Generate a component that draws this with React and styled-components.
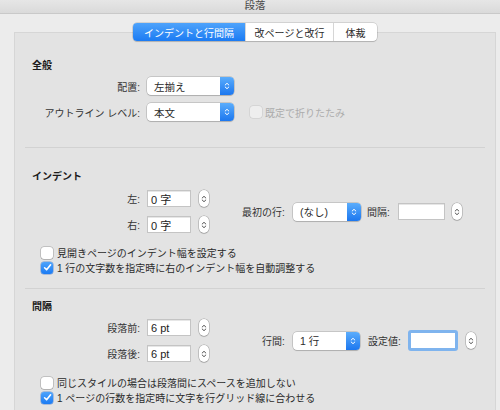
import styled, { createGlobalStyle } from 'styled-components';

const GlobalStyle = createGlobalStyle`
  html, body {
    margin: 0;
    padding: 0;
    overflow: hidden;
    background: #ececec;
  }
  body {
    font-family: 'Liberation Sans', 'Noto Sans CJK JP', sans-serif;
    -webkit-font-smoothing: antialiased;
  }
`;

const Window = styled.div`
  width: 510px;
  height: 410px;
  display: flex;
  flex-direction: column;
  background: #ececec;
  color: #2b2b2b;
  font-size: 10px;
`;

const TitleBar = styled.div`
  height: 13px;
  line-height: 11px;
  text-align: center;
  font-size: 10.5px;
  color: #4a4a4a;
  background: linear-gradient(#e6e6e6, #dadada);
  border-bottom: 1px solid #c9c9c9;
  overflow: hidden;
`;

const Content = styled.div`
  flex: 1;
  display: flex;
  flex-direction: column;
  padding: 9px 14px 0;
`;

const TabBar = styled.div`
  position: relative;
  z-index: 1;
  align-self: center;
  display: flex;
  height: 18px;
  margin-bottom: -9px;
  border-radius: 4px;
  background: #fff;
  box-shadow: 0 0 0 0.5px rgba(0, 0, 0, 0.22), 0 1px 1px rgba(0, 0, 0, 0.12);
`;

const Tab = styled.div`
  display: flex;
  align-items: center;
  justify-content: center;
  width: ${(p) => p.$w}px;
  font-size: 10px;
  color: ${(p) => (p.$active ? '#fff' : '#2b2b2b')};
  background: ${(p) => (p.$active ? 'linear-gradient(#4ea3fb, #1b7bf3)' : 'transparent')};
  border-left: ${(p) => (p.$first ? 'none' : '1px solid #d6d6d6')};
  &:first-child {
    border-radius: 4px 0 0 4px;
  }
  &:last-child {
    border-radius: 0 4px 4px 0;
  }
`;

const Panel = styled.div`
  flex: 1;
  background: #e3e3e3;
  border: 1px solid #d6d6d6;
  border-bottom: none;
  padding-left: 17px;
`;

const Section = styled.div`
  padding-top: ${(p) => p.$top}px;
  padding-bottom: ${(p) => p.$bottom}px;
`;

const SectionTitle = styled.div`
  height: 12px;
  line-height: 12px;
  font-weight: bold;
  font-size: 10px;
  color: #1c1c1c;
  margin-bottom: ${(p) => p.$gap}px;
`;

const Divider = styled.div`
  height: 1px;
  margin: 0 10px 0 -7px;
  background: #d2d2d2;
`;

const FormGrid = styled.div`
  display: grid;
  grid-template-columns: 108px auto;
  column-gap: 7px;
  row-gap: ${(p) => p.$gap}px;
  align-items: center;
`;

const Label = styled.div`
  text-align: right;
  color: #333;
  white-space: nowrap;
`;

const Controls = styled.div`
  display: flex;
  align-items: center;
`;

const SplitRow = styled.div`
  display: flex;
  align-items: center;
`;

const RightGroup = styled.div`
  display: flex;
  align-items: center;
  gap: 3px;
  margin-left: ${(p) => p.$offset}px;
`;

const InlineLabel = styled.div`
  width: ${(p) => p.$w}px;
  margin-left: ${(p) => p.$ml || 0}px;
  color: #333;
  white-space: nowrap;
`;

const SelectBox = styled.div`
  display: flex;
  align-items: stretch;
  width: ${(p) => p.$w}px;
  height: 18px;
  background: #fff;
  border-radius: 4px;
  box-shadow: 0 0 0 0.5px rgba(0, 0, 0, 0.25), 0 1px 1px rgba(0, 0, 0, 0.12);
  box-sizing: border-box;
`;

const SelectText = styled.span`
  flex: 1;
  display: flex;
  align-items: center;
  padding-left: 7px;
  font-size: 10.5px;
  color: #2b2b2b;
  white-space: nowrap;
`;

const SelectArrow = styled.span`
  width: 14px;
  display: flex;
  align-items: center;
  justify-content: center;
  background: linear-gradient(#5badfc, #1c77ef);
  border-radius: 0 4px 4px 0;
`;

const TextField = styled.div`
  display: flex;
  align-items: center;
  box-sizing: border-box;
  width: ${(p) => p.$w}px;
  height: ${(p) => (p.$focused ? 21 : 17)}px;
  padding-left: 3px;
  background: #fff;
  border: ${(p) => (p.$focused ? '3px solid #7fb4ee' : '1px solid #c4c4c4')};
  border-radius: ${(p) => (p.$focused ? '3px' : '0')};
  box-shadow: ${(p) => (p.$focused ? 'none' : 'inset 0 1px 0 #e6e6e6')};
  font-size: 11px;
  color: #222;
  white-space: nowrap;
`;

const StepperBox = styled.div`
  display: flex;
  flex-direction: column;
  align-items: center;
  justify-content: center;
  width: 10px;
  height: 17px;
  margin-left: ${(p) => p.$ml}px;
  box-sizing: border-box;
  background: #fff;
  border-radius: 5px;
  box-shadow: 0 0 0 0.5px rgba(0, 0, 0, 0.3), 0 1px 1px rgba(0, 0, 0, 0.1);
`;

const CheckRow = styled.div`
  display: flex;
  align-items: center;
  height: 15px;
  margin-left: ${(p) => p.$ml}px;
  color: ${(p) => (p.$disabled ? '#acacac' : '#2b2b2b')};
  white-space: nowrap;
`;

const CheckList = styled.div`
  margin-top: ${(p) => p.$top}px;
  padding-left: 9px;
`;

const Box = styled.span`
  display: flex;
  align-items: center;
  justify-content: center;
  width: 12px;
  height: 12px;
  margin-right: ${(p) => p.$gap}px;
  box-sizing: border-box;
  border-radius: 3px;
  background: ${(p) =>
    p.$checked ? 'linear-gradient(#4ea3fb, #1b7bf3)' : p.$disabled ? '#eeeeee' : '#fff'};
  box-shadow: ${(p) =>
    p.$checked
      ? '0 0 0 0.5px rgba(0, 70, 180, 0.5)'
      : p.$disabled
      ? '0 0 0 0.5px rgba(0, 0, 0, 0.12)'
      : '0 0 0 0.5px rgba(0, 0, 0, 0.3), 0 1px 1px rgba(0, 0, 0, 0.08)'};
`;

const Chevrons = ({ color, size = 8 }) => (
  <svg width="6" height={size} viewBox="0 0 6 8">
    <path d="M1.2 3 L3 1.3 L4.8 3" fill="none" stroke={color} strokeWidth="1" strokeLinecap="round" strokeLinejoin="round" />
    <path d="M1.2 5 L3 6.7 L4.8 5" fill="none" stroke={color} strokeWidth="1" strokeLinecap="round" strokeLinejoin="round" />
  </svg>
);

const CheckMark = () => (
  <svg width="9" height="9" viewBox="0 0 9 9">
    <path d="M1.6 4.8 L3.6 6.8 L7.6 1.8" fill="none" stroke="#fff" strokeWidth="1.6" strokeLinecap="round" strokeLinejoin="round" />
  </svg>
);

const Select = ({ value, w }) => (
  <SelectBox $w={w}>
    <SelectText>{value}</SelectText>
    <SelectArrow>
      <Chevrons color="#fff" />
    </SelectArrow>
  </SelectBox>
);

const Stepper = ({ ml = 8 }) => (
  <StepperBox $ml={ml}>
    <Chevrons color="#555" size={10} />
  </StepperBox>
);

const Check = ({ label, checked, disabled, ml = 0, gap = 4 }) => (
  <CheckRow $ml={ml} $disabled={disabled}>
    <Box $checked={checked} $disabled={disabled} $gap={gap}>
      {checked && <CheckMark />}
    </Box>
    {label}
  </CheckRow>
);

const App = () => {
  return (
    <>
      <GlobalStyle />
      <Window>
        <TitleBar>段落</TitleBar>
        <Content>
          <TabBar>
            <Tab $w={112} $active $first>
              インデントと行間隔
            </Tab>
            <Tab $w={87}>改ページと改行</Tab>
            <Tab $w={43}>体裁</Tab>
          </TabBar>
          <Panel>
            <Section $top={27} $bottom={26}>
              <SectionTitle $gap={5}>全般</SectionTitle>
              <FormGrid $gap={8}>
                <Label>配置:</Label>
                <Controls>
                  <Select value="左揃え" w={87} />
                </Controls>
                <Label>アウトライン レベル:</Label>
                <Controls>
                  <Select value="本文" w={87} />
                  <Check label="既定で折りたたみ" disabled ml={16} gap={3} />
                </Controls>
              </FormGrid>
            </Section>
            <Divider />
            <Section $top={23} $bottom={13}>
              <SectionTitle $gap={7}>インデント</SectionTitle>
              <SplitRow>
                <FormGrid $gap={9}>
                  <Label>左:</Label>
                  <Controls>
                    <TextField $w={44}>0 字</TextField>
                    <Stepper />
                  </Controls>
                  <Label>右:</Label>
                  <Controls>
                    <TextField $w={44}>0 字</TextField>
                    <Stepper />
                  </Controls>
                </FormGrid>
                <RightGroup $offset={33}>
                  <InlineLabel $w={48}>最初の行:</InlineLabel>
                  <Select value="(なし)" w={68} />
                  <InlineLabel $w={28} $ml={3}>
                    間隔:
                  </InlineLabel>
                  <TextField $w={47} />
                  <Stepper ml={4} />
                </RightGroup>
              </SplitRow>
              <CheckList $top={12}>
                <Check label="見開きページのインデント幅を設定する" />
                <Check label="1 行の文字数を指定時に右のインデント幅を自動調整する" checked />
              </CheckList>
            </Section>
            <Divider />
            <Section $top={12} $bottom={0}>
              <SectionTitle $gap={6}>間隔</SectionTitle>
              <SplitRow>
                <FormGrid $gap={9}>
                  <Label>段落前:</Label>
                  <Controls>
                    <TextField $w={44}>6 pt</TextField>
                    <Stepper />
                  </Controls>
                  <Label>段落後:</Label>
                  <Controls>
                    <TextField $w={44}>6 pt</TextField>
                    <Stepper />
                  </Controls>
                </FormGrid>
                <RightGroup $offset={53}>
                  <InlineLabel $w={28}>行間:</InlineLabel>
                  <Select value="1 行" w={67} />
                  <InlineLabel $w={37} $ml={5}>
                    設定値:
                  </InlineLabel>
                  <TextField $w={50} $focused />
                  <Stepper ml={5} />
                </RightGroup>
              </SplitRow>
              <CheckList $top={13}>
                <Check label="同じスタイルの場合は段落間にスペースを追加しない" />
                <Check label="1 ページの行数を指定時に文字を行グリッド線に合わせる" checked />
              </CheckList>
            </Section>
          </Panel>
        </Content>
      </Window>
    </>
  );
};

export default App;
